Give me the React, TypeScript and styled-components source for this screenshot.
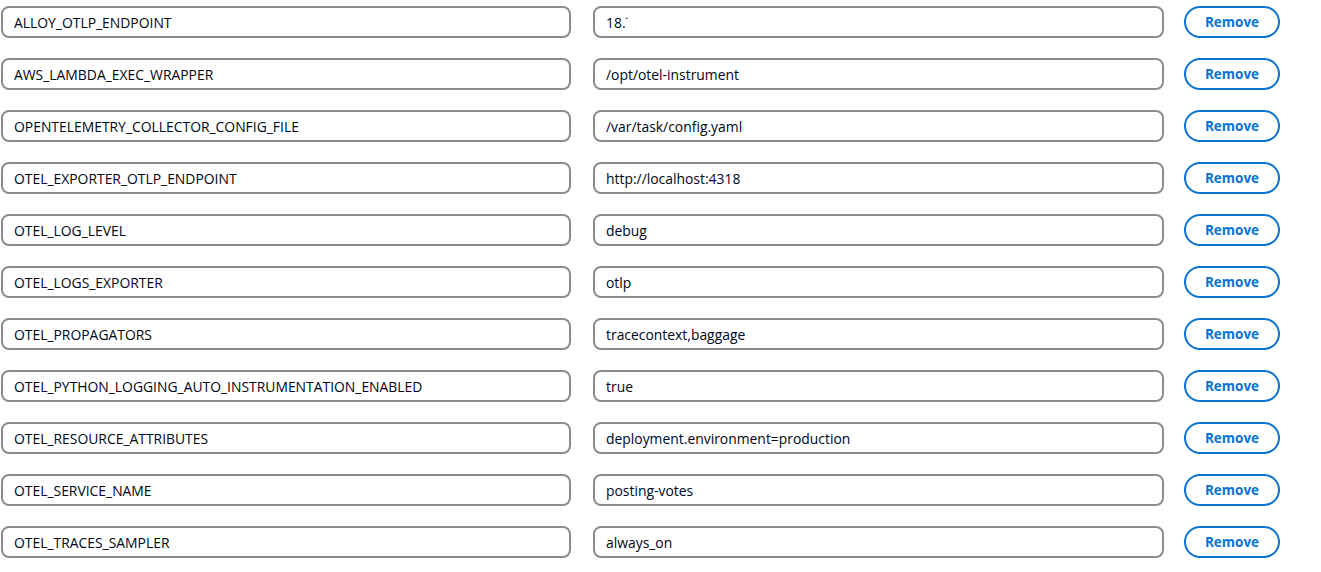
import React from 'react';
import styled, { createGlobalStyle } from 'styled-components';

const GlobalStyle = createGlobalStyle`
  html, body {
    margin: 0;
    padding: 0;
    background: #ffffff;
  }
  body {
    font-family: "Open Sans", "Noto Sans", "Liberation Sans", sans-serif;
  }
`;

const vars: [string, string][] = [
  ['ALLOY_OTLP_ENDPOINT', '18.\u02d9'],
  ['AWS_LAMBDA_EXEC_WRAPPER', '/opt/otel-instrument'],
  ['OPENTELEMETRY_COLLECTOR_CONFIG_FILE', '/var/task/config.yaml'],
  ['OTEL_EXPORTER_OTLP_ENDPOINT', 'http://localhost:4318'],
  ['OTEL_LOG_LEVEL', 'debug'],
  ['OTEL_LOGS_EXPORTER', 'otlp'],
  ['OTEL_PROPAGATORS', 'tracecontext,baggage'],
  ['OTEL_PYTHON_LOGGING_AUTO_INSTRUMENTATION_ENABLED', 'true'],
  ['OTEL_RESOURCE_ATTRIBUTES', 'deployment.environment=production'],
  ['OTEL_SERVICE_NAME', 'posting-votes'],
  ['OTEL_TRACES_SAMPLER', 'always_on'],
];

const List = styled.div`
  display: flex;
  flex-direction: column;
  gap: 20px;
  padding: 6px 0 0 1px;
`;

const Row = styled.div`
  display: flex;
  align-items: center;
`;

const Field = styled.input<{ $w: number }>`
  box-sizing: border-box;
  width: ${(p) => p.$w}px;
  height: 32px;
  padding: 0 11px;
  border: 2px solid #8c8c94;
  border-radius: 8px;
  background: #ffffff;
  color: #000716;
  font-family: "Open Sans", "Noto Sans", "Liberation Sans", sans-serif;
  font-size: 13.9px;
  outline: none;
`;

const Gap = styled.div<{ $w: number }>`
  width: ${(p) => p.$w}px;
  flex: none;
`;

const RemoveButton = styled.button`
  box-sizing: border-box;
  width: 96px;
  height: 32px;
  border: 2px solid #0972d3;
  border-radius: 20px;
  background: #ffffff;
  color: #0972d3;
  font-family: "Open Sans", "Noto Sans", "Liberation Sans", sans-serif;
  font-size: 13.5px;
  font-weight: 700;
  cursor: pointer;
  padding: 0;
`;

export default function App() {
  return (
    <>
      <GlobalStyle />
      <List>
        {vars.map(([k, v]) => (
          <Row key={k}>
            <Field $w={570} value={k} readOnly />
            <Gap $w={22} />
            <Field $w={571} value={v} readOnly />
            <Gap $w={20} />
            <RemoveButton>Remove</RemoveButton>
          </Row>
        ))}
      </List>
    </>
  );
}
